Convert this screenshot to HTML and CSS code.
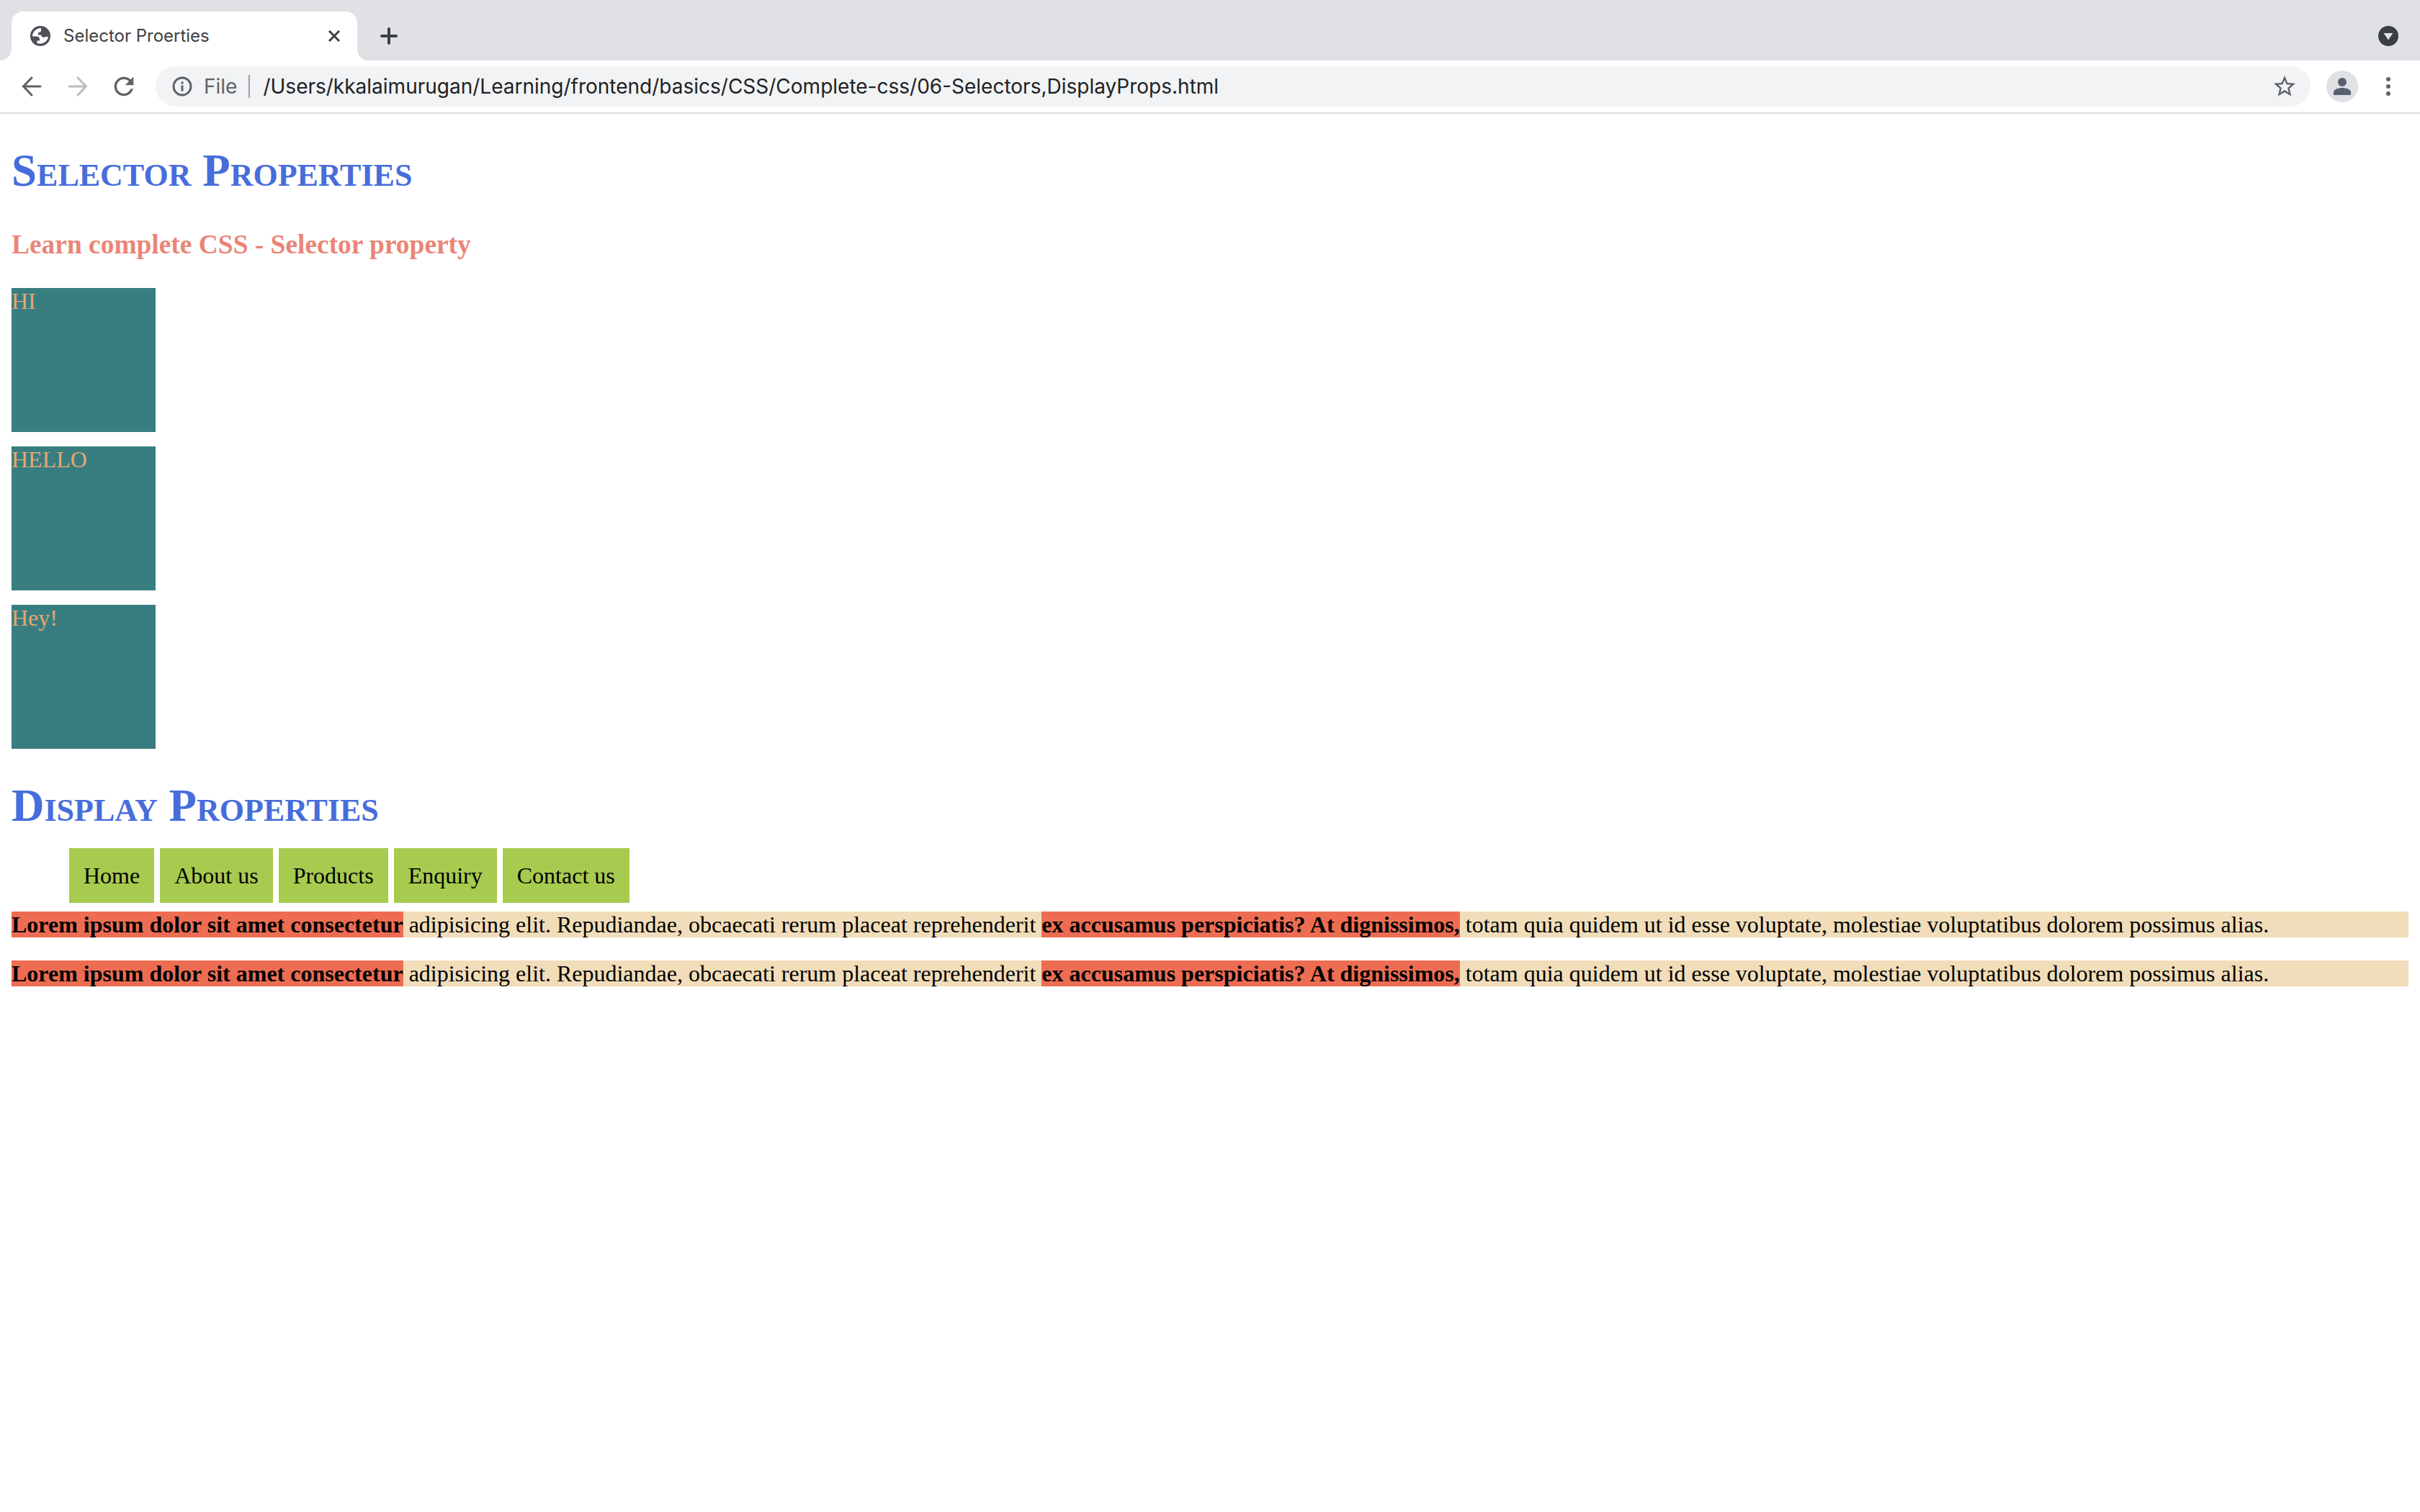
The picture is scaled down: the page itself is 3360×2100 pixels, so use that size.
FILE: index.html
```html
<!DOCTYPE html>
<html lang="en">
<head>
<meta charset="utf-8">
<title>Selector Proerties</title>
<link rel="stylesheet" href="styles.css">
</head>
<body>
<header class="browser">
  <div class="tab-strip">
    <div class="tab">
      <svg class="favicon" viewBox="0 0 28 28" aria-hidden="true"><circle cx="14" cy="14" r="14" fill="#4d5057"/><path fill="#fff" d="M15 3C8 3 3 8.500 3 14.500h5.500c2.500 0 4.500 1.500 4.500 4v2h-3.500V24c7 2.500 14.500-2 15.500-9h-4c-1 1-3 1.500-4.500 0-1-1-1-2-2-2.500H11V9c2.500 0 4-.5 4-3z"/></svg>
      <span class="tab-title">Selector Proerties</span>
      <button class="icon-button close" type="button" aria-label="Close tab"><svg viewBox="0 0 16 16"><path d="M1 1l14 14M15 1L1 15"/></svg></button>
    </div>
    <button class="icon-button new-tab" type="button" aria-label="New tab"><svg viewBox="0 0 24 24"><path d="M12 2v20M2 12h20"/></svg></button>
    <button class="icon-button tab-search" type="button" aria-label="Search tabs"><svg viewBox="0 0 28 28"><circle cx="14" cy="14" r="14"/><path d="M7.500 10h13L14 19.500z"/></svg></button>
  </div>
  <div class="toolbar">
    <div class="navigation">
      <button class="icon-button nav-button" type="button" aria-label="Back"><svg viewBox="0 0 28 28"><path d="M26 14H3M14 2L2.500 14 14 26"/></svg></button>
      <button class="icon-button nav-button" type="button" aria-label="Forward" disabled><svg viewBox="0 0 28 28"><path d="M2 14h23M14 2l11.500 12L14 26"/></svg></button>
      <button class="icon-button reload" type="button" aria-label="Reload"><svg viewBox="0 0 24 24"><path d="M17.650 6.350C16.200 4.900 14.210 4 12 4c-4.420 0-7.990 3.580-7.990 8s3.570 8 7.990 8c3.730 0 6.840-2.550 7.730-6h-2.080c-.82 2.330-3.040 4-5.650 4-3.310 0-6-2.690-6-6s2.690-6 6-6c1.660 0 3.140.69 4.220 1.780L13 11h7V4l-2.350 2.350z"/></svg></button>
    </div>
    <div class="address-bar">
      <svg class="info" viewBox="0 0 28 28" aria-hidden="true"><circle cx="14" cy="14" r="12"/><path d="M14 12.500v8M14 7.500v3"/></svg>
      <label class="scheme" for="address">File</label>
      <input class="address" id="address" type="text" value="/Users/kkalaimurugan/Learning/frontend/basics/CSS/Complete-css/06-Selectors,DisplayProps.html" spellcheck="false">
      <button class="icon-button bookmark" type="button" aria-label="Bookmark this page"><svg viewBox="0 0 24 24"><path d="M22 9.240l-7.190-.62L12 2 9.190 8.630 2 9.240l5.460 4.730L5.820 21 12 17.270 18.180 21l-1.630-7.030L22 9.240zM12 15.400l-3.760 2.270 1-4.280-3.320-2.880 4.380-.38L12 6.100l1.710 4.040 4.380.38-3.320 2.880 1 4.280L12 15.400z"/></svg></button>
    </div>
    <button class="icon-button profile" type="button" aria-label="Profile"><svg viewBox="0 0 24 24"><circle cx="12" cy="6" r="6"/><path d="M0 24v-4c0-4 7-6 12-6s12 2 12 6v4z"/></svg></button>
    <button class="icon-button menu" type="button" aria-label="Menu"><svg viewBox="0 0 8 28"><circle cx="4" cy="4" r="3"/><circle cx="4" cy="14" r="3"/><circle cx="4" cy="24" r="3"/></svg></button>
  </div>
</header>
<main class="page">
  <h1 class="title">Selector Properties</h1>
  <h3 class="subtitle">Learn complete CSS - Selector property</h3>
  <div class="boxes">
    <div class="box">HI</div>
    <div class="box">HELLO</div>
    <div class="box">Hey!</div>
  </div>
  <h1 class="title">Display Properties</h1>
  <ul class="links">
    <li class="link">Home</li>
    <li class="link">About us</li>
    <li class="link">Products</li>
    <li class="link">Enquiry</li>
    <li class="link">Contact us</li>
  </ul>
  <p class="text"><strong class="mark">Lorem ipsum dolor sit amet consectetur</strong> adipisicing elit. Repudiandae, obcaecati rerum placeat reprehenderit <strong class="mark">ex accusamus perspiciatis? At dignissimos,</strong> totam quia quidem ut id esse voluptate, molestiae voluptatibus dolorem possimus alias.</p>
  <p class="text"><strong class="mark">Lorem ipsum dolor sit amet consectetur</strong> adipisicing elit. Repudiandae, obcaecati rerum placeat reprehenderit <strong class="mark">ex accusamus perspiciatis? At dignissimos,</strong> totam quia quidem ut id esse voluptate, molestiae voluptatibus dolorem possimus alias.</p>
</main>
</body>
</html>
```

FILE: styles.css
```css
* {
  box-sizing: border-box;
}

body {
  margin: 0;
  background: #fff;
  color: #000;
  font-family: "Liberation Serif", "Times New Roman", serif;
  font-size: 32px;
  line-height: 36px;
}

/* Browser window */
.browser {
  font-family: Inter, Roboto, sans-serif;
  border-bottom: 2px solid #dadce3;
}

.icon-button {
  display: flex;
  align-items: center;
  justify-content: center;
  flex: none;
  padding: 0;
  border: 0;
  background: none;
}

.icon-button svg {
  display: block;
  fill: none;
  stroke: #5f6368;
  stroke-width: 3;
}

.tab-strip {
  display: flex;
  align-items: flex-end;
  height: 84px;
  padding: 0 30px 0 16px;
  background: #dfe1e5;
}

.tab {
  position: relative;
  display: flex;
  align-items: center;
  width: 480px;
  height: 68px;
  padding: 0 24px 0 26px;
  border-radius: 16px 16px 0 0;
  background: #fff;
}

.tab::before,
.tab::after {
  content: "";
  position: absolute;
  bottom: 0;
  width: 16px;
  height: 16px;
}

.tab::before {
  right: 100%;
  background: radial-gradient(circle at 0 0, transparent 16px, #fff 16px);
}

.tab::after {
  left: 100%;
  background: radial-gradient(circle at 100% 0, transparent 16px, #fff 16px);
}

.favicon {
  width: 28px;
  height: 28px;
}

.tab-title {
  flex: 1;
  padding-left: 18px;
  color: #3c4043;
  font-size: 24px;
  line-height: 28px;
}

.close svg {
  width: 16px;
  height: 16px;
  stroke: #3c4043;
}

.new-tab {
  height: 68px;
  margin-left: 32px;
}

.new-tab svg {
  width: 24px;
  height: 24px;
  stroke: #3c4043;
  stroke-width: 4;
  stroke-linecap: round;
}

.tab-search {
  height: 68px;
  margin-left: auto;
}

.tab-search svg {
  width: 28px;
  height: 28px;
  fill: #dfe1e5;
  stroke: none;
}

.tab-search circle {
  fill: #3c4043;
}

.toolbar {
  display: flex;
  align-items: center;
  height: 72px;
  padding: 0 40px 0 30px;
}

.navigation {
  display: flex;
  align-items: center;
  gap: 36px;
  width: 186px;
}

.nav-button svg {
  width: 28px;
  height: 28px;
  stroke-linecap: round;
}

.nav-button:disabled svg {
  stroke: #babcbe;
}

.reload {
  width: 28px;
}

.reload svg {
  flex: none;
  width: 40px;
  height: 40px;
  fill: #5f6368;
  stroke: none;
}

.address-bar {
  display: flex;
  flex: 1;
  align-items: center;
  height: 56px;
  padding: 0 16px 0 23px;
  border-radius: 28px;
  background: #f1f3f4;
  font-size: 28px;
  line-height: 32px;
}

.info {
  width: 28px;
  height: 28px;
  fill: none;
  stroke: #5f6368;
  stroke-width: 3;
}

.scheme {
  padding: 0 16px;
  border-right: 2px solid #9aa0a6;
  color: #5f6368;
}

.address {
  flex: 1;
  min-width: 0;
  padding: 0 18px;
  border: 0;
  outline: 0;
  background: none;
  color: #202124;
  font: inherit;
}

.bookmark svg {
  width: 36px;
  height: 36px;
  margin: 0 2px;
  fill: #5f6368;
  stroke: none;
}

.profile {
  width: 44px;
  height: 44px;
  margin-left: 22px;
  border-radius: 50%;
  background: #dfe1e5;
}

.profile svg {
  width: 24px;
  height: 24px;
  fill: #586070;
  stroke: none;
}

.menu {
  margin-left: 38px;
}

.menu svg {
  width: 8px;
  height: 28px;
  fill: #5f6368;
  stroke: none;
}

/* Document */
.page {
  display: flow-root;
  padding: 0 16px;
}

.title {
  margin: 42px 0;
  color: #476ddb;
  font-size: 63px;
  line-height: 74px;
  font-variant: small-caps;
}

.subtitle {
  margin: 36px 0;
  color: #ea8576;
  line-height: 48px;
}

.boxes {
  display: grid;
  gap: 20px;
}

.box {
  width: 200px;
  height: 200px;
  background: #387e80;
  color: #e9a66f;
}

.links {
  margin: 32px 0;
  padding-left: 80px;
  list-style: none;
}

.link {
  display: inline;
  padding: 20px;
  background: #a7cb4f;
}

.text {
  margin: 32px 0;
  background: #f1ddb9;
}

.mark {
  background: #ee6d52;
}
```
